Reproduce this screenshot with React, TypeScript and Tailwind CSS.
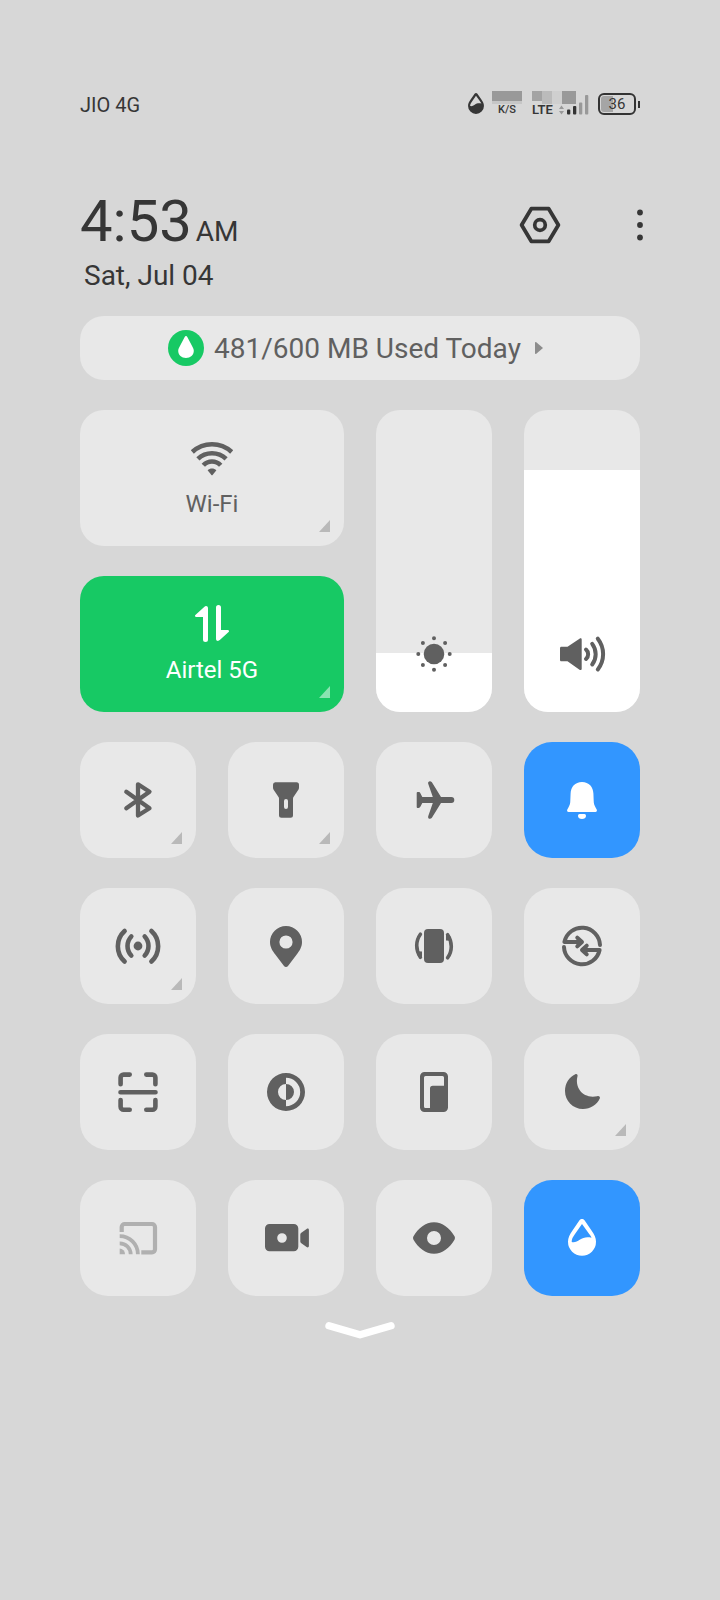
import { useState } from 'react'
import type { ReactNode } from 'react'
import { clsx } from 'clsx'

type Tile = {
  label: string
  icon: ReactNode
  tone?: 'blue' | 'disabled'
  expandable?: boolean
}

const DROP =
  'M21.5 6.3c1.2-1.7 3.8-1.7 5 0l7 10.2c3 4 4.5 7.5 4.5 11.3a14 14 0 0 1-28 0c0-3.8 1.5-7.3 4.5-11.3z' +
  'M24 10l-7 10c-2.2 3-3.4 5.3-3.3 8 3 .6 5.5-.4 8-2.2 3.5-2.4 7-3.2 11.8-2.1-.4-1.2-1.4-2.6-2.5-4z'

function Icon({ children, className }: { children: ReactNode; className?: string }) {
  return (
    <svg viewBox="0 0 48 48" fill="currentColor" aria-hidden="true" className={clsx('size-12 shrink-0', className)}>
      {children}
    </svg>
  )
}

const tiles: Tile[] = [
  {
    label: 'Bluetooth',
    expandable: true,
    icon: (
      <path d="M12.3 15.7 35.5 32.3 24 39.5V8.3L35.5 15.7 12.3 32.3" fill="none" stroke="currentColor" strokeWidth="4.3" strokeLinecap="round" strokeLinejoin="round" />
    ),
  },
  {
    label: 'Flashlight',
    expandable: true,
    icon: (
      <path fillRule="evenodd" d="M13.5 6.3h21a2.5 2.5 0 0 1 2.5 2.5v2.6c0 1-.3 1.9-.8 2.7L31.5 21c-.4.6-.5 1-.5 1.7v16.500a2.5 2.5 0 0 1-2.5 2.5h-9a2.5 2.5 0 0 1-2.5-2.5V22.7c0-.7-.1-1.1-.5-1.7l-4.700-6.900c-.5-.8-.8-1.7-.8-2.7V8.800a2.5 2.5 0 0 1 2.3-2.500zM24 23a2 2 0 0 0-2 2v6a2 2 0 0 0 4 0v-6a2 2 0 0 0-2-2z" />
    ),
  },
  {
    label: 'Airplane mode',
    icon: (
      <path d="M12.3 21H22.8L18.2 7.8c-.8-2.5 2.3-3.6 3.7-1.5L31 21h10.3a3 3 0 0 1 0 6H31l-9.1 14.700c-1.4 2.1-4.5 1-3.7-1.5L22.800 27H12.3l-1.8 3.6c-.5.9-1 1.4-2 1.4H7.6c-.6 0-.9-.3-.9-.9V16.9c0-.6.3-.9.9-.9h.9c1 0 1.5.5 2 1.4z" />
    ),
  },
  {
    label: 'Ringer',
    tone: 'blue',
    icon: (
      <>
        <path d="M24 6c7 0 11.2 5 11.4 11.5l.3 7.5c0 2.5.7 4.5 2 6.7l1 1.9c.6 1.3 0 2.4-1.3 2.4H10.600c-1.3 0-1.9-1.1-1.3-2.4l1-1.9c1.3-2.2 2-4.2 2-6.7l.3-7.5C12.8 11 17 6 24 6z" />
        <path d="M20 40c0-1.2.6-2 1.6-2h4.8c1 0 1.6.8 1.6 2 0 1.8-1.8 3-4 3s-4-1.2-4-3z" />
      </>
    ),
  },
  {
    label: 'Hotspot',
    expandable: true,
    icon: (
      <>
        <circle cx="24" cy="24" r="4.4" />
        <path d="M17.3 14.5a13.8 13.8 0 0 0 0 19M30.7 14.5a13.8 13.8 0 0 1 0 19M10.6 9a20.6 20.6 0 0 0 0 30.5M37.4 9a20.6 20.6 0 0 1 0 30.5" fill="none" stroke="currentColor" strokeWidth="4.6" strokeLinecap="round" />
      </>
    ),
  },
  {
    label: 'Location',
    icon: (
      <path fillRule="evenodd" d="M24 4a16 16 0 0 1 16 16c0 5.2-2.6 9-5.3 12.5L26 44a2.5 2.5 0 0 1-4 0l-8.7-11.5C10.6 29 8 25.2 8 20A16 16 0 0 1 24 4zm0 9.4a6.6 6.6 0 1 0 0 13.2 6.6 6.6 0 0 0 0-13.2z" />
    ),
  },
  {
    label: 'Auto-rotate',
    icon: (
      <>
        <rect x="14" y="7" width="20" height="34" rx="4" />
        <path d="M10.4 12.2C5.5 19 5.5 28 10.4 35.3M37.6 35.8C42.5 29 42.5 20 37.6 12.7" fill="none" stroke="currentColor" strokeWidth="3.6" strokeLinecap="round" />
        <path d="M12 29.5v6.5l-4-1.5-1.2-5.2zM36 18.5V12l4 1.5 1.2 5.2z" />
      </>
    ),
  },
  {
    label: 'Data switch',
    icon: (
      <path d="M42 23A18 18 0 0 0 6.4 20H23M19.3 15.7l4.700 4.3-4.700 4.3M6 25A18 18 0 0 0 41.6 28H25M28.7 23.7 24 28l4.7 4.3" fill="none" stroke="currentColor" strokeWidth="4" strokeLinecap="round" strokeLinejoin="round" />
    ),
  },
  {
    label: 'Scanner',
    icon: (
      <path d="M15.7 6.6H9.6a3 3 0 0 0-3 3v6.7M32.3 6.6h6.1a3 3 0 0 1 3 3v6.7M15.7 41.8H9.6a3 3 0 0 1-3-3v-6.7M32.3 41.8h6.1a3 3 0 0 0 3-3v-6.7M6.5 24.3h35" fill="none" stroke="currentColor" strokeWidth="4.6" strokeLinecap="round" />
    ),
  },
  {
    label: 'Dark mode',
    icon: (
      <path fillRule="evenodd" d="M24 5a19 19 0 1 1 0 38 19 19 0 0 1 0-38zm0 4.8V16a8 8 0 0 0 0 16v6.2a14.2 14.2 0 0 0 0-28.4zM24 16a8 8 0 0 1 0 16z" />
    ),
  },
  {
    label: 'Floating windows',
    icon: (
      <path fillRule="evenodd" d="M14.5 4h19A4.5 4.5 0 0 1 38 8.5v31a4.5 4.5 0 0 1-4.5 4.5h-19a4.5 4.5 0 0 1-4.5-4.5v-31A4.5 4.5 0 0 1 14.5 4zm1 4A1.5 1.5 0 0 0 14 9.5v29a1.5 1.5 0 0 0 1.5 1.5H20V20.5a2.8 2.8 0 0 1 2.8-2.8H34V9.5A1.5 1.5 0 0 0 32.5 8z" />
    ),
  },
  {
    label: 'Do not disturb',
    expandable: true,
    icon: (
      <path d="M17.3 6.3c1.6-.7 2.7.5 2.2 2C16.5 20 25 31 39.2 28.2c1.8-.5 3.3.6 2.6 2.3C39 36.8 32.5 41 25 41 15 41 7 33 7 23 7 15.5 11.2 9 17.3 6.3z" />
    ),
  },
  {
    label: 'Cast',
    tone: 'disabled',
    icon: (
      <>
        <path d="M7.7 18v-5a3 3 0 0 1 3-3H38a3 3 0 0 1 3 3v22.3a3 3 0 0 1-3 3H27.3" fill="none" stroke="currentColor" strokeWidth="4.2" />
        <path d="M5.7 29.3a11 11 0 0 1 11 11M5.7 22.1a18.2 18.2 0 0 1 18.2 18.2" fill="none" stroke="currentColor" strokeWidth="3.8" />
        <path d="M5.7 34.5a5.8 5.8 0 0 1 5.3 5.8H5.7z" />
      </>
    ),
  },
  {
    label: 'Screen recorder',
    icon: (
      <path fillRule="evenodd" d="M7.5 10h24.3a4.5 4.5 0 0 1 4.5 4.5v18.3a4.5 4.5 0 0 1-4.5 4.5H7.5A4.5 4.5 0 0 1 3 32.8V14.5A4.5 4.5 0 0 1 7.5 10zM20 19.2a4.8 4.8 0 1 0 0 9.6 4.8 4.8 0 0 0 0-9.6zM38.3 20.5c0-.6.2-1 .7-1.4l5.6-4.1c1-.8 2.3-.3 2.3 1v16c0 1.3-1.3 1.8-2.3 1L39 28.9c-.5-.4-.7-.8-.7-1.4z" />
    ),
  },
  {
    label: 'Reading mode',
    icon: (
      <path fillRule="evenodd" d="M3.500 22.3C8.5 14 15.5 8.3 24 8.3S39.5 14 44.5 22.3c.6 1 .6 2.4 0 3.4C39.5 34 32.5 39.7 24 39.700S8.5 34 3.5 25.7c-.6-1-.6-2.4 0-3.4zM24 17a7 7 0 1 0 0 14 7 7 0 0 0 0-14z" />
    ),
  },
  { label: 'Data usage', tone: 'blue', icon: <path fillRule="evenodd" d={DROP} /> },
]

function Corner({ className }: { className: string }) {
  return (
    <svg viewBox="0 0 11 12" fill="currentColor" aria-hidden="true" className={clsx('absolute right-[14px] bottom-[14px] h-3 w-[11px]', className)}>
      <path d="M11 0v12H0z" />
    </svg>
  )
}

function StatusBar() {
  return (
    <div className="flex h-7 items-start justify-between">
      <span className="text-xl leading-7">JIO 4G</span>
      <div className="flex h-6 items-end">
        <svg viewBox="10 5 28 37" fill="currentColor" aria-hidden="true" className="mr-2 mb-[1px] h-[21px] w-4">
          <path fillRule="evenodd" d={DROP} />
        </svg>
        <div className="flex w-[30px] flex-col items-center">
          <div className="h-[10px] w-full bg-[#999999]" />
          <div className="h-[3px] w-full bg-[#c6c6c6]" />
          <span className="text-[11px] leading-[11px] font-medium">K/S</span>
        </div>
        <div className="ml-[10px] flex flex-col">
          <div className="flex h-[13px]">
            <div className="h-[10px] w-[10px] bg-[#a3a3a3]" />
            <div className="h-full w-[10px] bg-[#bbbbbb]" />
            <div className="h-full w-[10px] bg-[#cfcfcf]" />
            <div className="h-full w-[14px] bg-[#999999]" />
          </div>
          <span className="text-[13px] leading-[11px] font-semibold">LTE</span>
        </div>
        <svg viewBox="0 0 30 24" aria-hidden="true" className="-ml-[17px] h-6 w-[30px]">
          <path d="M0 18l2.500-3.500L5 18zM0 20l2.500 3.500L5 20z" fill="#999" />
          <rect x="8" y="18.5" width="3.3" height="5" rx="1" fill="#333" />
          <rect x="14" y="15" width="3.3" height="8.5" rx="1" fill="#333" />
          <rect x="20" y="11.5" width="3.3" height="12" rx="1" fill="#999" />
          <rect x="26" y="4" width="3.3" height="19.5" rx="1" fill="#999" />
        </svg>
        <div className="ml-[9px] flex items-center gap-[2px]">
          <div className="relative flex h-[22px] w-[38px] items-center justify-center rounded-md border-2 border-[#333333]">
            <div className="absolute top-[1px] bottom-[1px] left-[1px] w-3 rounded-l-[3px] bg-[#a5a5a5]" />
            <span className="relative text-[15px] leading-[18px]">36</span>
          </div>
          <div className="h-[7px] w-[2px] bg-[#333333]" />
        </div>
      </div>
    </div>
  )
}

function WideTile({ label, icon, active }: { label: string; icon: ReactNode; active?: boolean }) {
  return (
    <button
      type="button"
      aria-pressed={!!active}
      className={clsx(
        'relative col-span-2 flex h-[136px] flex-col items-center rounded-3xl pt-[27px]',
        active ? 'bg-[#17c964] text-white' : 'bg-[#e8e8e8] text-[#606060]',
      )}
    >
      <span className="flex h-10 items-center">{icon}</span>
      <span className="mt-[11px] text-2xl leading-8">{label}</span>
      <Corner className={active ? 'text-white/50' : 'text-[#b9b9b9]'} />
    </button>
  )
}

function LevelSlider({ label, initial, icon }: { label: string; initial: number; icon: ReactNode }) {
  const [level, setLevel] = useState(initial)
  return (
    <label className="relative row-span-2 flex flex-col justify-end overflow-hidden rounded-3xl bg-[#e8e8e8] text-[#606060]">
      <div className="bg-white" style={{ height: `${level}%` }} />
      <Icon className="absolute bottom-[34px] left-1/2 -translate-x-1/2">{icon}</Icon>
      <input
        type="range"
        aria-label={label}
        min={0}
        max={100}
        value={level}
        onChange={e => setLevel(Number(e.target.value))}
        className="absolute inset-0 size-full cursor-pointer opacity-0 [direction:rtl] [writing-mode:vertical-lr]"
      />
    </label>
  )
}

export default function App() {
  return (
    <main className="min-h-screen bg-[#d7d7d7] px-20 pt-[91px] pb-12 font-[Roboto,sans-serif] text-[#363636]">
      <StatusBar />

      {/* Clock */}
      <header className="mt-[70px]">
        <div className="flex items-center justify-between">
          <p className="flex items-baseline gap-1">
            <span className="text-[58px] leading-[64px]">4:53</span>
            <span className="text-[28px] leading-8">AM</span>
          </p>
          <div className="-mr-3 flex items-center gap-16 pt-2">
            <button type="button" aria-label="Settings">
              <Icon>
                <path d="M5.6 24 15.3 7.7h17.4L42.4 24 32.7 40.300H15.3z" fill="none" stroke="currentColor" strokeWidth="3.8" strokeLinejoin="round" />
                <circle cx="24" cy="24" r="5.3" fill="none" stroke="currentColor" strokeWidth="3.700" />
              </Icon>
            </button>
            <button type="button" aria-label="More options">
              <svg viewBox="0 0 24 48" fill="currentColor" aria-hidden="true" className="h-12 w-6">
                <circle cx="12" cy="11.5" r="2.9" />
                <circle cx="12" cy="24" r="2.9" />
                <circle cx="12" cy="36.5" r="2.9" />
              </svg>
            </button>
          </div>
        </div>
        <p className="mt-[5px] pl-1 text-[28px] leading-9">Sat, Jul 04</p>
      </header>

      {/* Data usage */}
      <button type="button" className="mt-[22px] flex h-16 w-full items-center justify-center gap-[10px] rounded-3xl bg-[#e8e8e8] pr-[9px] text-[#606060]">
        <svg viewBox="0 0 36 36" aria-hidden="true" className="size-9">
          <circle cx="18" cy="18" r="18" fill="#17c964" />
          <path d="M18 6c.6 0 1 .5 1.3 1.1l4.5 8.4c1.1 2 2 3.6 2 5.3 0 4.2-3.4 7.2-7.8 7.2s-7.8-3-7.8-7.2c0-1.7.9-3.3 2-5.3l4.5-8.4C17 6.5 17.4 6 18 6z" fill="#fff" />
        </svg>
        <span className="pt-[2px] text-[28px] leading-9">481/600 MB Used Today</span>
        <svg viewBox="0 0 8 12" aria-hidden="true" className="ml-1 h-3 w-2">
          <path d="M1 0l7 6-7 6c-.6 0-1-.3-1-1V1c0-.7.4-1 1-1z" fill="#8c8c8c" />
        </svg>
      </button>

      <section className="mt-[30px] grid grid-cols-4 gap-x-8 gap-y-[30px]">
        <WideTile
          label="Wi-Fi"
          icon={
            <svg viewBox="0 -3 42 37" aria-hidden="true" className="h-[37px] w-[42px]">
              <path d="M1.3 10a28.8 28.8 0 0 1 39.4 0M6.9 16.8a20.5 20.5 0 0 1 28.2 0M12.3 23.3a11.8 11.8 0 0 1 17.4 0" fill="none" stroke="currentColor" strokeWidth="4.6" />
              <path d="M16.6 28.3c2.5-2.4 6.3-2.4 8.8 0L21.6 33c-.4.4-.8.4-1.2 0z" fill="currentColor" />
            </svg>
          }
        />
        <LevelSlider
          label="Brightness"
          initial={19.5}
          icon={
            <>
              <circle cx="24" cy="24" r="10.3" />
              <path d="M24 8.3v0M24 39.7v0M8.3 24h0M39.7 24h0M12.9 12.9h0M35.1 12.9h0M12.9 35.1h0M35.1 35.1h0" stroke="currentColor" strokeWidth="4" strokeLinecap="round" />
            </>
          }
        />
        <LevelSlider
          label="Volume"
          initial={80}
          icon={
            <>
              <path d="M3.5 16.7H9.5L21.5 8.7c1.2-.8 2.2-.3 2.2 1v29c0 1.3-1 1.800-2.2 1l-12-8.400H3.5c-1 0-1.5-.5-1.5-1.5V18.2c0-1 .5-1.5 1.5-1.5z" />
              <path d="M28 19.5a6.200 6.200 0 0 1 0 9.400M34.200 13.900a17 17 0 0 1 0 20.600M39.800 8.700a25 25 0 0 1 0 30.800" fill="none" stroke="currentColor" strokeWidth="4" strokeLinecap="round" />
            </>
          }
        />
        <WideTile
          label="Airtel 5G"
          active
          icon={
            <svg viewBox="0 0 34 37" fill="currentColor" aria-hidden="true" className="h-[37px] w-[34px]">
              <path d="M13 3.3v31.2a2.5 2.5 0 0 1-5 0V12H1.2c-1.2 0-1.6-1.2-.8-2L9.2 1.9C10.8.5 13 1 13 3.3z" />
              <path d="M21 33.7V2.5a2.5 2.5 0 0 1 5 0V25h6.8c1.2 0 1.6 1.2.8 2l-8.8 8.1c-1.6 1.4-3.8.9-3.8-1.4z" />
            </svg>
          }
        />

        {tiles.map(t => (
          <button
            key={t.label}
            type="button"
            aria-label={t.label}
            disabled={t.tone === 'disabled'}
            className={clsx(
              'relative flex aspect-square items-center justify-center rounded-[28px]',
              t.tone === 'blue' ? 'bg-[#3296ff] text-white' : 'bg-[#e8e8e8]',
              t.tone === 'disabled' && 'text-[#b0b0b0]',
              !t.tone && 'text-[#606060]',
            )}
          >
            <Icon>{t.icon}</Icon>
            {t.expandable && <Corner className="text-[#b9b9b9]" />}
          </button>
        ))}
      </section>

      <button type="button" aria-label="Expand" className="mx-auto mt-6 block">
        <svg viewBox="0 0 72 20" aria-hidden="true" className="h-5 w-[72px]">
          <path d="M5 5.7 36 14.7 67 5.7" fill="none" stroke="#fff" strokeWidth="7.4" strokeLinecap="round" strokeLinejoin="round" />
        </svg>
      </button>
    </main>
  )
}
